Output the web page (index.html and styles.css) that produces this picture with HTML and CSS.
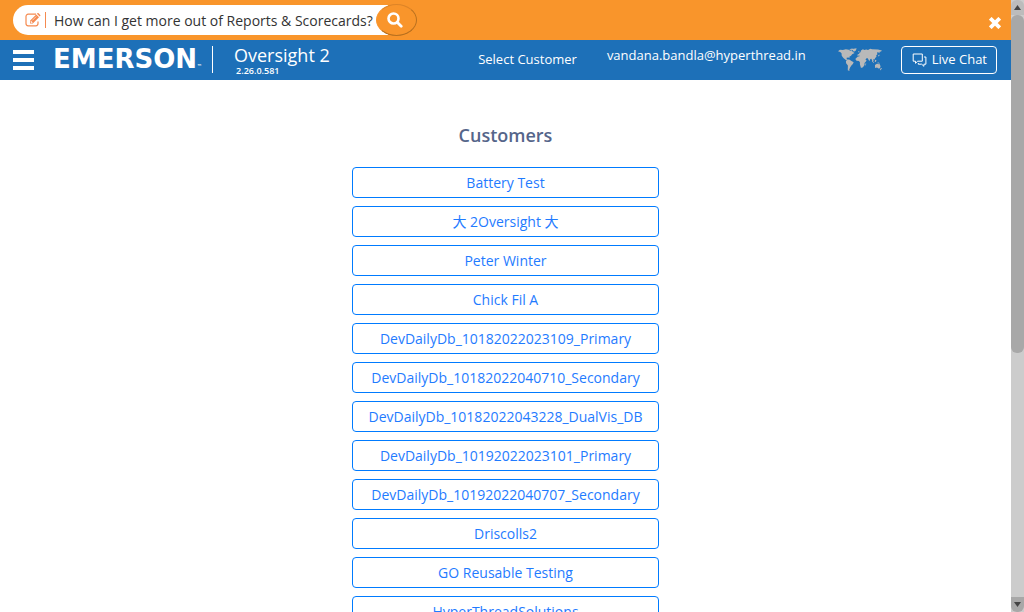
FILE: index.html
```html
<!DOCTYPE html>
<html lang="en">
<head>
<meta charset="utf-8">
<meta name="viewport" content="width=device-width, initial-scale=1">
<title>Oversight 2</title>
<link rel="stylesheet" href="styles.css">
</head>
<body>
<div class="page">
  <div class="help-bar">
    <form class="help-search">
      <svg class="edit-icon" viewBox="0 0 16 14" aria-hidden="true">
        <path d="M11 1.2H3.2A2.2 2.2 0 0 0 1 3.4v7.2a2.2 2.2 0 0 0 2.2 2.2h7.6a2.2 2.2 0 0 0 2.2-2.2V8.4" fill="none" stroke="currentColor" stroke-width="1.2"/>
        <path d="M5 10.5V7.7L11.2 1.5 14 4.3 7.8 10.5zM11.9.8l.5-.5q.6-.5 1.2 0l1.6 1.6q.5.6 0 1.2l-.5.5z" fill="currentColor"/>
        <path d="M6 9.6V8.2l1.3 1.4zM7.2 7.5l4-4" fill="#fff" stroke="#fff" stroke-width=".6"/>
      </svg>
      <span class="help-divider"></span>
      <input class="help-input" type="text" aria-label="Help question" value="How can I get more out of Reports &amp; Scorecards?">
      <button class="help-submit" type="button" aria-label="Search">
        <svg class="search-icon" viewBox="0 0 16 16" aria-hidden="true"><circle cx="6.5" cy="6.5" r="5" fill="none" stroke="currentColor" stroke-width="2.6"/><path d="M10.2 10.2l4 4" stroke="currentColor" stroke-width="2.8" stroke-linecap="round"/></svg>
      </button>
    </form>
    <button class="close" type="button" aria-label="Close">
      <svg class="close-icon" viewBox="0 0 12 12" aria-hidden="true"><path d="M2.6 2.6l6.8 6.8M9.4 2.6L2.6 9.4" stroke="currentColor" stroke-width="3.8" stroke-linecap="square"/></svg>
    </button>
  </div>
  <header class="header">
    <button class="menu" type="button" aria-label="Menu"><span class="menu-line"></span><span class="menu-line"></span><span class="menu-line"></span></button>
    <div class="brand">EMERSON<span class="brand-mark">™</span></div>
    <div class="product">
      <div class="product-name">Oversight 2</div>
      <div class="product-version">2.26.0.581</div>
    </div>
    <nav class="tools">
      <a class="select-customer" href="#">Select Customer</a>
      <a class="account" href="#">vandana.bandla@hyperthread.in</a>
      <svg class="world" viewBox="0 0 46 24" role="img" aria-label="World map">
        <path d="M0 3l2-1.5 3 .3 3-.8 3 .5 1.5 1 1.5-.4 1 1.5 2 1.2-2.5 1.2-1.2 1.7-1.7 1 .2 1.6-1-.8-2 .3.2 1.6 1.5 0 .8 1.2 1.5.6-.6.4L8 12 5.5 10 3.8 7.7 3.6 5 2.2 3.8z M11.5 1l3-.8 1.2.8-1 .8-2.5-.2z M14.5.7L19 .1l-.7 2.2-2 1.2-1-1z M9.5 11.7l2-.1 2.3 1.3 2.2 1.3-.8 2-1.5 1.4-1.2 1.8-1 2.3.3 1.5L10 22.5l.1-4.8-1.8-2.5-.2-1.9z"/>
        <path d="M20.4 3.4l1.4-.3.1.7-1.3.2z M20 7.6l.1-1.5 1.5-.2.2-1.3 1.2-.6.5-1.6 2-1.3 1.4.8 2-.6 1.8.5 2.2-1.3 2 .6 6 .2 4 1-.9 1-1.4.2-.3 1.7-1.2-1.2-1.3.4.5 1.7-1.2 1.1.2 1.6-1.3 1.1-.7 1.6-1.4-.2.5 1.4-.9 1-1.4-2.9-1 .1-1.1 2.3-1.6-2.9-1.4-.2-.5 1.5-1.6.9-1.6-4-3-.2-.7-1.2-1.6 1z M20 8.7l2.5-.7 3.8.8 1.4 3.2 1.5.1-.6 1.4-1.5 1.5v2.1l-1.2 1.7-1.2 1-1.3.2-1-3.6v-2.2l-1-1.2-2.5-.2-1.2-1.9z M28.2 15.4l.6 0-.2 2-.7.3z M35 12.7l2.1 2.2-.5.2-2-1.9z M38 11.8l1.4.7-.8 1.6-1.1-.6z M40 14l3 1.3-1.5.3z M37.8 17.2l2-1.3h1.3l.8.7.6-.7 1 2.5-.6 2-1.6.3-1.4-1-2 .4z M43.8 20.2l1.2.3-1.5 2-.7-.3z M41 7.5l1.2-1 .2 1.2-1 .8z"/>
      </svg>
      <button class="chat" type="button">
        <svg class="chat-icon" viewBox="0 0 14 14" aria-hidden="true"><path d="M.7 1h9.1v7.2H5.2L3 10.3V8.2H.7z M11.5 4h1.9v7.2h-2v2.1l-2.2-2.1H5.8V10" fill="none" stroke="currentColor"/></svg>
        Live Chat
      </button>
    </nav>
  </header>
  <main class="content">
    <h1 class="title">Customers</h1>
    <div class="customers">
      <button class="customer" type="button">Battery Test</button>
      <button class="customer" type="button">大 2Oversight 大</button>
      <button class="customer" type="button">Peter Winter</button>
      <button class="customer" type="button">Chick Fil A</button>
      <button class="customer" type="button">DevDailyDb_10182022023109_Primary</button>
      <button class="customer" type="button">DevDailyDb_10182022040710_Secondary</button>
      <button class="customer" type="button">DevDailyDb_10182022043228_DualVis_DB</button>
      <button class="customer" type="button">DevDailyDb_10192022023101_Primary</button>
      <button class="customer" type="button">DevDailyDb_10192022040707_Secondary</button>
      <button class="customer" type="button">Driscolls2</button>
      <button class="customer" type="button">GO Reusable Testing</button>
      <button class="customer" type="button">HyperThreadSolutions</button>
    </div>
  </main>
</div>
<div class="scrollbar" aria-hidden="true">
  <div class="scroll-end scroll-up"><svg class="scroll-arrow" viewBox="0 0 7 5"><path d="M0 5L3.5 0 7 5z"/></svg></div>
  <div class="scroll-track"><div class="scroll-thumb"></div></div>
  <div class="scroll-end scroll-down"><svg class="scroll-arrow" viewBox="0 0 7 5"><path d="M0 0h7L3.5 5z"/></svg></div>
</div>
</body>
</html>
```
FILE: styles.css
```css
* { box-sizing: border-box; }
body {
  margin: 0;
  height: 100vh;
  display: flex;
  overflow: hidden;
  background: #fff;
  font: 14px/21px "Open Sans", "Noto Sans CJK SC", sans-serif;
}
button, input { font: inherit; }
button { cursor: pointer; }
a { color: inherit; text-decoration: none; }
svg { display: block; }
.page { flex: 1; min-width: 0; overflow: hidden; }

.help-bar {
  display: flex;
  align-items: center;
  justify-content: space-between;
  height: 40px;
  padding: 0 10px 0 13px;
  background: #f9952b;
}
.help-search {
  display: flex;
  align-items: center;
  width: 404px;
  height: 30px;
  padding-left: 12px;
  border-radius: 15px;
  background: linear-gradient(90deg, #fff 375px, transparent 375px);
}
.edit-icon { width: 16px; height: 14px; color: #f58a50; }
.help-divider { width: 1px; height: 16px; margin-left: 4px; background: #f58a50; }
.help-input {
  flex: 1;
  min-width: 0;
  height: 30px;
  padding: 0 0 0 8px;
  border: 0;
  outline: 0;
  background: transparent;
  color: #333;
}
.help-submit {
  display: grid;
  place-items: center;
  width: 41px;
  height: 32px;
  padding: 0 3px 0 0;
  border: 1px solid;
  border-color: #dd8427 #b8701f #b8701f #f9952b;
  border-radius: 50%;
  background: #f9952b;
  color: #fff;
}
.search-icon { width: 16px; height: 16px; }
.close {
  padding: 5px 0 0;
  border: 0;
  background: none;
  color: #fff;
}
.close-icon { width: 12px; height: 12px; }

.header {
  display: flex;
  align-items: center;
  height: 40px;
  padding: 0 14px 1px 13px;
  background: #1d70b8;
  color: #fff;
}
.menu {
  display: grid;
  gap: 4px;
  width: 21px;
  padding: 1px 0 0;
  border: 0;
  background: none;
}
.menu-line { height: 4px; background: #fff; }
.brand {
  display: flex;
  align-items: baseline;
  height: 27px;
  margin-left: 19px;
  padding-right: 10px;
  border-right: 1px solid #fff;
  font: bold 26px/27px "DejaVu Sans", sans-serif;
}
.brand-mark { font-size: 5px; line-height: 5px; }
.product { margin-left: 21px; }
.product-name { font-size: 18px; line-height: 22px; }
.product-version { padding-left: 2px; font-size: 9px; font-weight: 600; line-height: 10px; }
.tools { display: flex; align-items: center; margin-left: auto; font-size: 13px; }
.select-customer { margin-right: 30px; }
.account { padding-bottom: 8px; }
.world { width: 45px; height: 24px; margin: 0 18px 0 32px; fill: #b9b9b9; }
.chat {
  display: flex;
  align-items: center;
  gap: 5px;
  height: 28px;
  padding: 0 9px 0 10px;
  border: 1px solid #fff;
  border-radius: 4px;
  background: none;
  color: #fff;
}
.chat-icon { width: 15px; height: 14px; }

.content { padding: 44px 16px 0; }
.title {
  margin: 0 0 21px;
  color: #55658a;
  font-size: 18px;
  font-weight: 600;
  line-height: 22px;
  text-align: center;
}
.customers { display: grid; gap: 8px; max-width: 307px; margin: 0 auto; }
.customer {
  height: 31px;
  padding: 0 8px;
  border: 1px solid #007bff;
  border-radius: 4px;
  background: #fff;
  color: #1f7bff;
  white-space: nowrap;
}

.scrollbar { display: flex; flex-direction: column; width: 13px; background: #ccc; }
.scroll-end { display: grid; place-items: center; height: 15px; background: #a8a8a8; }
.scroll-up { border-radius: 6px 6px 0 0; background: #bcbcbc; }
.scroll-down { border-radius: 0 0 6px 6px; }
.scroll-arrow { width: 7px; height: 5px; fill: #444; }
.scroll-track { flex: 1; }
.scroll-thumb { height: 58%; border-radius: 6px; background: #a8a8a8; }
```
